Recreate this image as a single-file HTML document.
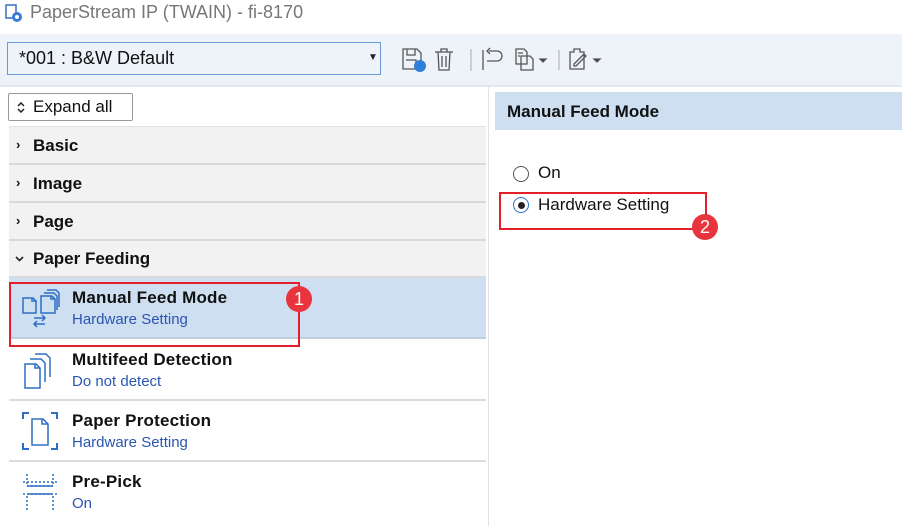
<!DOCTYPE html>
<html><head><meta charset="utf-8"><style>
body{margin:0;width:902px;height:526px;overflow:hidden;background:#fff;font-family:"Liberation Sans","DejaVu Sans",sans-serif;position:relative}
.a{position:absolute}
.row{position:absolute;left:9px;width:477px;background:#f2f2f2;border-bottom:2px solid #d9d9d9;font-weight:bold;font-size:17px;color:#111}
.row span.c{position:absolute;left:7px;font-size:13px;font-weight:bold}
.row span.t{position:absolute;left:24px}
.item{position:absolute;left:9px;width:477px;height:59px;border-bottom:2px solid #dcdcdc}
.item .h{position:absolute;left:63px;top:10px;font-weight:bold;font-size:17px;color:#111;letter-spacing:0.2px}
.item .s{position:absolute;left:63px;top:33px;font-size:15px;color:#2a55b0}
.item svg{position:absolute;left:12px;top:10px}
.badge{position:absolute;width:26px;height:26px;border-radius:50%;background:#e8343c;color:#fff;font-size:18px;text-align:center;line-height:26px}
</style></head><body>
<svg class="a" style="left:4px;top:4px" width="20" height="20"><rect x="2" y="1" width="10" height="13" fill="#fff" stroke="#3a6fc0" stroke-width="1.5"/><circle cx="13" cy="13" r="5" fill="#3a7bd5"/><circle cx="13" cy="13" r="2" fill="#fff"/></svg>
<div class="a" style="left:30px;top:2px;font-size:18px;color:#777">PaperStream IP (TWAIN) - fi-8170</div>
<div class="a" style="left:0;top:34px;width:902px;height:51px;background:#eef3fa;border-bottom:2px solid #e4e8ee"></div>
<div class="a" style="left:7px;top:42px;width:372px;height:31px;border:1px solid #6a9ad8;background:#eef3fa"></div>
<div class="a" style="left:19px;top:48px;font-size:18px;color:#111">*001 : B&amp;W Default</div>
<div class="a" style="left:368px;top:52px;font-size:10px;color:#222">▼</div>
<svg class="a" style="left:400px;top:44px" width="215" height="30" fill="none" stroke="#555" stroke-width="1.3">
<path d="M3 5h14l4 4v16H3z M7 5v6h8V5 M6 16h10v9"/><circle cx="20" cy="22" r="6" fill="#2f7fd8" stroke="none"/>
<path d="M35 8h18 M41 8V5h6v3 M38 8l1 18h10l1-18 M42 12v11 M46 12v11"/>
<path d="M71 5v22" stroke="#bbb"/>
<path d="M83 6v20" /><path d="M87 17h10a5 5 0 0 0 0-10h-8 M90 4l-3 3 3 3"/>
<path d="M116 5h8l3 3v12h-11z M121 12h9l3 3v11h-12z M118 9h5 M118 12h2"/>
<path d="M140 15l3 3 3-3z" fill="#333"/><path d="M159 6v20" stroke="#bbb"/>
<path d="M170 8h4v-3h6v3h4v17h-14z M174 20l10-10 2 2-10 10h-2z"/><path d="M194 15l3 3 3-3z" fill="#333"/>
</svg>
<div class="a" style="left:8px;top:93px;width:123px;height:26px;border:1px solid #999;border-radius:2px;background:#fff;font-size:17px;line-height:26px;color:#111"><svg style="position:absolute;left:8px;top:8px" width="8" height="11" fill="none" stroke="#222" stroke-width="1.5"><path d="M1 4l3-3 3 3 M1 7l3 3 3-3"/></svg><span style="position:absolute;left:24px">Expand all</span></div>
<div class="a" style="left:9px;top:126px;width:477px;height:1px;background:#e0e0e0"></div>
<div class="row" style="top:127px;height:36px"><span class="c" style="top:10px">›</span><span class="t" style="top:9px">Basic</span></div>
<div class="row" style="top:165px;height:36px"><span class="c" style="top:10px">›</span><span class="t" style="top:9px">Image</span></div>
<div class="row" style="top:203px;height:36px"><span class="c" style="top:10px">›</span><span class="t" style="top:9px">Page</span></div>
<div class="row" style="top:241px;height:35px"><svg style="position:absolute;left:6px;top:15px" width="9" height="6" fill="none" stroke="#222" stroke-width="1.6"><path d="M1 1l3.5 3.5L8 1"/></svg><span class="t" style="top:8px">Paper Feeding</span></div>
<div class="item" style="top:278px;background:#cfdff2;border-bottom-color:#c0cfe0">
<svg width="46" height="40" fill="none" stroke="#2e6fc2" stroke-width="1.5"><path d="M2 10h10l3 3v12H2z M11 10v3h4"/><path d="M20 8h11l3 3v14H20z M30 8v3h4 M23 5h10l3 3v14 M26 2h9l3 3v14"/><path d="M13 30h11 M21 27l3 3-3 3 M24 36H13 M16 33l-3 3 3 3"/></svg>
<div class="h">Manual Feed Mode</div><div class="s">Hardware Setting</div></div>
<div class="item" style="top:340px">
<svg width="46" height="40" fill="none" stroke="#2e6fc2" stroke-width="1.5"><path d="M4 14h11l4 4v20H4z M14 14v4h5 M9 9h11l4 4v19 M14 4h11l4 4v19"/></svg>
<div class="h">Multifeed Detection</div><div class="s">Do not detect</div></div>
<div class="item" style="top:401px">
<svg width="46" height="40" fill="none" stroke="#2e6fc2" stroke-width="2"><path d="M2 8V2h6 M30 2h6v6 M2 32v6h6 M30 38h6v-6"/><path stroke-width="1.5" d="M11 8h11l5 5v21H11z M21 8v5h6"/></svg>
<div class="h">Paper Protection</div><div class="s">Hardware Setting</div></div>
<div class="item" style="top:462px;border:none">
<svg width="46" height="40" fill="none" stroke="#2e6fc2" stroke-width="1.5"><path d="M6 2v12h26V2 M2 10h34 M6 38V22h26v16 M2 22h34" stroke-dasharray="2 2"/><path d="M6 14h26 M6 22h26"/></svg>
<div class="h">Pre-Pick</div><div class="s">On</div></div>
<div class="a" style="left:488px;top:86px;width:1px;height:440px;background:#e2e2e2"></div>
<div class="a" style="left:495px;top:92px;width:407px;height:38px;background:#cfdff2"></div>
<div class="a" style="left:507px;top:102px;font-size:17px;font-weight:bold;color:#111">Manual Feed Mode</div>
<div class="a" style="left:513px;top:166px;width:14px;height:14px;border:1.5px solid #555;border-radius:50%"></div>
<div class="a" style="left:538px;top:163px;font-size:17px;color:#111">On</div>
<div class="a" style="left:513px;top:197px;width:14px;height:14px;border:1.5px solid #2a6fd0;border-radius:50%"></div>
<div class="a" style="left:518px;top:202px;width:7px;height:7px;background:#222;border-radius:50%"></div>
<div class="a" style="left:538px;top:195px;font-size:17px;color:#111">Hardware Setting</div>
<div class="a" style="left:9px;top:282px;width:287px;height:61px;border:2px solid #e3202a"></div>
<div class="badge" style="left:286px;top:286px">1</div>
<div class="a" style="left:499px;top:192px;width:204px;height:34px;border:2px solid #e3202a"></div>
<div class="badge" style="left:692px;top:214px">2</div>
</body></html>
